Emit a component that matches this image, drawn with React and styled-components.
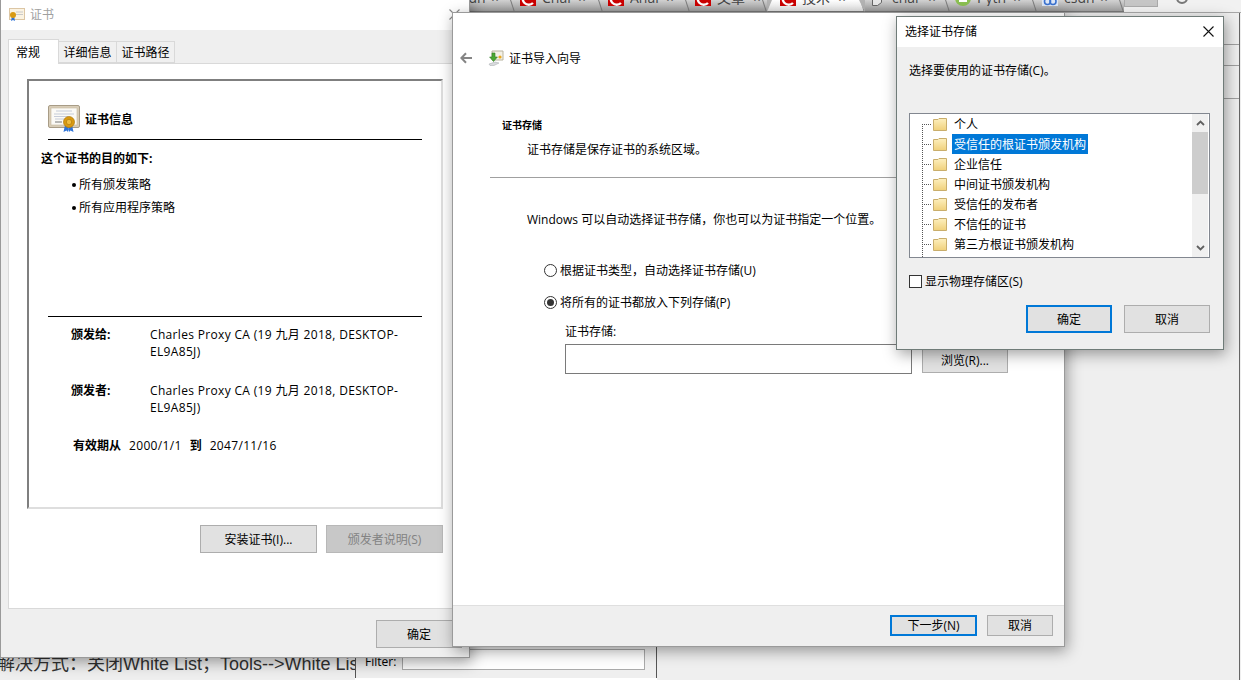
import React from 'react';
import styled, { createGlobalStyle, css } from 'styled-components';

const GlobalStyle = createGlobalStyle`
  html, body {
    margin: 0;
    padding: 0;
    background: #efefef;
  }
  * {
    box-sizing: border-box;
  }
`;

const Desktop = styled.div`
  position: relative;
  width: 1241px;
  height: 680px;
  overflow: hidden;
  background: #efefef;
  color: #000;
  font: 12px/17px "Open Sans", "Noto Sans CJK SC", sans-serif;
`;

// Browser tabs peeking out at the top
const TabStrip = styled.div`
  display: flex;
  height: 13px;
  padding-left: 428px;
  overflow: hidden;
  background: linear-gradient(to right, #b4b4b4 1124px, #f1f1f1 1124px);
  border-bottom: 1px solid #a8a8a8;
`;

const BrowserTab = styled.div`
  position: relative;
  display: flex;
  flex: none;
  gap: 6px;
  align-items: flex-start;
  width: ${({ $width }) => $width}px;
  height: 12px;
  padding-left: ${({ $active }) => ($active ? 13 : 5)}px;
  overflow: hidden;
  color: #444;
  font-size: 14px;
  line-height: 16px;
  background: ${({ $active }) => ($active
    ? 'linear-gradient(#fff, #e4e4e4)'
    : 'linear-gradient(#d2d2d2, #a0a0a0)')};
  border-bottom: 1px solid #777;
  ${({ $active }) => $active && css`
    clip-path: polygon(5px 0, calc(100% - 6px) 0, 100% 100%, 0 100%);
  `}
  &::after {
    position: absolute;
    top: -2px;
    right: 2px;
    width: 1px;
    height: 16px;
    background: #7d7d7d;
    transform: rotate(-18deg);
    content: '';
  }
`;

const TabIconBox = styled.svg`
  flex: none;
  margin-top: -10px;
`;

const TabLabel = styled.span`
  width: ${({ $active }) => ($active ? 30 : 30)}px;
  margin-top: -10px;
  overflow: hidden;
  white-space: nowrap;
`;

const TabClose = styled.span`
  margin-top: -10px;
  font-weight: 700;
`;

const NewTab = styled.div`
  flex: none;
  width: 34px;
  height: 7px;
  background: #c6c6c6;
  border: 1px solid #aaa;
  border-top: 0;
`;

const BrowserDot = styled.div`
  flex: none;
  width: 12px;
  height: 12px;
  margin: -8px 0 0 18px;
  border: 2px solid #777;
  border-radius: 50%;
`;

const BackPane = styled.div`
  position: absolute;
  top: 13px;
  left: 1000px;
  width: 240px;
  height: 667px;
  border-right: 1px solid #666;
`;

const PaneRow = styled.div`
  height: ${({ $height }) => $height}px;
  border-bottom: 1px solid #a0a0a0;
`;

const Note = styled.div`
  position: absolute;
  top: 652px;
  left: -3px;
  color: #333;
  font: 18px/24px "Liberation Sans", "Noto Sans CJK SC", sans-serif;
  white-space: nowrap;
`;

const FilterWindow = styled.div`
  position: absolute;
  top: 630px;
  left: 355px;
  display: flex;
  align-items: flex-end;
  justify-content: space-between;
  width: 302px;
  height: 48px;
  padding: 0 11px 8px 9px;
  background: #efefef;
  border-right: 1px solid #555;
  border-left: 1px solid #555;
  box-shadow: 0 2px 0 #fff, 0 3px 0 #555;
`;

const FilterInput = styled.div`
  width: 243px;
  height: 21px;
  background: #fff;
  border: 1px solid #aaa;
`;

// Windows
const Window = styled.div`
  position: absolute;
  top: ${({ $top }) => $top}px;
  left: ${({ $left }) => $left}px;
  display: flex;
  flex-direction: column;
  width: ${({ $width }) => $width}px;
  height: ${({ $height }) => $height}px;
  background: #efefef;
  border: 1px solid ${({ $border }) => $border || '#9a9a9a'};
  box-shadow: 2px 4px 14px rgba(0, 0, 0, 0.38);
`;

const TitleBar = styled.div`
  display: flex;
  flex: none;
  align-items: center;
  justify-content: space-between;
  height: 30px;
  padding: 0 ${({ $right }) => $right}px 2px 8px;
  color: ${({ $faded }) => ($faded ? '#a0a0a0' : '#000')};
  background: #fff;
`;

const TitleGroup = styled.div`
  display: flex;
  gap: 5px;
  align-items: center;
`;

const Button = styled.div`
  display: flex;
  flex: none;
  align-items: center;
  justify-content: center;
  width: ${({ $width }) => $width || 86}px;
  height: ${({ $height }) => $height || 28}px;
  background: #e1e1e1;
  border: 1px solid #adadad;
  ${({ $primary }) => $primary && css`
    border: 2px solid #0078d7;
  `}
  ${({ $disabled }) => $disabled && css`
    color: #838383;
    background: #c8c8c8;
    border-color: #b8b8b8;
  `}
`;

// Certificate window
const CertBody = styled.div`
  display: flex;
  flex: 1;
  flex-direction: column;
  padding: 9px 7px 0 7px;
`;

const CertTabs = styled.div`
  display: flex;
  align-items: flex-end;
  height: 24px;
`;

const CertTab = styled.div`
  position: relative;
  z-index: 1;
  display: flex;
  align-items: center;
  justify-content: ${({ $active }) => ($active ? 'flex-start' : 'center')};
  width: ${({ $width }) => $width}px;
  height: ${({ $active }) => ($active ? 25 : 22)}px;
  margin-bottom: ${({ $active }) => ($active ? -1 : 0)}px;
  padding-left: ${({ $active }) => ($active ? 7 : 0)}px;
  background: ${({ $active }) => ($active ? '#fff' : '#f0f0f0')};
  border: 1px solid #d9d9d9;
  border-bottom: ${({ $active }) => ($active ? 0 : '1px solid #d9d9d9')};
  border-left: ${({ $active }) => ($active ? '1px solid #d9d9d9' : 0)};
`;

const CertPanel = styled.div`
  height: 546px;
  padding: 15px 0 0 18px;
  background: #fff;
  border: 1px solid #d9d9d9;
`;

const CertFrame = styled.div`
  width: 416px;
  height: 430px;
  padding: 24px 0 0;
  border-top: 2px solid #7f7f7f;
  border-right: 2px solid #dedede;
  border-bottom: 2px solid #dedede;
  border-left: 2px solid #7f7f7f;
`;

const CertHeader = styled.div`
  display: flex;
  gap: 5px;
  align-items: center;
  width: 374px;
  height: 35px;
  margin-left: 19px;
  padding-bottom: 6px;
  font-weight: 700;
  border-bottom: 1px solid #000;
`;

const Purpose = styled.div`
  height: 176px;
  margin-left: 12px;
  padding-top: 10px;
`;

const Strong = styled.div`
  font-weight: 700;
`;

const BulletList = styled.ul`
  display: flex;
  flex-direction: column;
  gap: 6px;
  margin: 9px 0 0;
  padding: 0 0 0 31px;
  list-style: none;
`;

const Bullet = styled.li`
  display: flex;
  gap: 3px;
  align-items: center;
  &::before {
    display: block;
    width: 4px;
    height: 4px;
    background: #000;
    border-radius: 50%;
    content: '';
  }
`;

const Details = styled.div`
  width: 374px;
  margin-left: 19px;
  padding: 9px 0 0 23px;
  border-top: 1px solid #000;
`;

const DetailRow = styled.div`
  display: grid;
  grid-template-columns: 79px 272px;
  margin-bottom: 22px;
`;

const Value = styled.span`
  letter-spacing: 0.33px;
`;

const Validity = styled.div`
  display: flex;
  gap: 8px;
  margin: -1px 0 0 2px;
`;

const CertActions = styled.div`
  display: flex;
  gap: 9px;
  justify-content: flex-end;
  width: 416px;
  margin-top: 16px;
`;

const CertFooter = styled.div`
  display: flex;
  justify-content: flex-end;
  margin-top: 11px;
`;

// Import wizard
const WizardMain = styled.div`
  flex: 1;
  background: #fff;
`;

const WizardHeader = styled.div`
  display: flex;
  align-items: center;
  height: 16px;
  margin-top: 37px;
  padding-left: 7px;
  font-size: 12px;
`;

const BackArrow = styled.svg`
  margin-right: 16px;
`;

const WizardTitle = styled.span`
  margin-left: 5px;
`;

const StepTitle = styled.div`
  margin: 52px 0 0 49px;
  font-size: 10px;
  font-weight: 700;
  line-height: 14px;
`;

const StepText = styled.div`
  margin: ${({ $top }) => $top}px 0 0 74px;
`;

const Divider = styled.div`
  margin: 19px 0 0 37px;
  border-top: 1px solid #a0a0a0;
`;

const Options = styled.div`
  display: flex;
  flex-direction: column;
  gap: 15px;
  margin: 34px 0 0 91px;
`;

const Option = styled.div`
  display: flex;
  gap: 3px;
  align-items: center;
`;

const Radio = styled.span`
  display: flex;
  align-items: center;
  justify-content: center;
  width: 13px;
  height: 13px;
  background: #fff;
  border: 1px solid #333;
  border-radius: 50%;
  &::after {
    display: ${({ $checked }) => ($checked ? 'block' : 'none')};
    width: 7px;
    height: 7px;
    background: #333;
    border-radius: 50%;
    content: '';
  }
`;

const StoreField = styled.div`
  margin: 12px 0 0 112px;
`;

const StoreRow = styled.div`
  display: flex;
  gap: 10px;
  align-items: flex-end;
  margin-top: 4px;
`;

const StoreInput = styled.div`
  width: 347px;
  height: 30px;
  background: #fff;
  border: 1px solid #7a7a7a;
`;

const BrowseButton = styled(Button)`
  margin-bottom: 1px;
`;

const WizardFooter = styled.div`
  display: flex;
  flex: none;
  gap: 10px;
  justify-content: flex-end;
  height: 41px;
  padding: 9px 11px 0 0;
  border-top: 1px solid #dfdfdf;
`;

// Store dialog
const DialogBody = styled.div`
  display: flex;
  flex: 1;
  flex-direction: column;
  padding: 15px 13px 0 12px;
`;

const Tree = styled.div`
  display: flex;
  width: 301px;
  height: 145px;
  margin-top: 34px;
  background: #fff;
  border: 1px solid #828790;
`;

const TreeList = styled.div`
  flex: 1;
  overflow: hidden;
`;

const TreeRow = styled.div`
  display: flex;
  align-items: center;
  height: 20px;
  padding-left: 12px;
`;

const Connector = styled.span`
  flex: none;
  align-self: stretch;
  width: 10px;
  margin-right: 1px;
  background:
    repeating-linear-gradient(to bottom, #555 0 1px, transparent 1px 2px) left ${({ $first }) => ($first ? 'bottom' : 'top')} / 1px ${({ $first }) => ($first ? '50%' : '100%')} no-repeat,
    repeating-linear-gradient(to right, #555 0 1px, transparent 1px 2px) left center / 100% 1px no-repeat;
`;

const TreeTail = styled.div`
  width: 1px;
  height: 4px;
  margin-left: 12px;
  background: repeating-linear-gradient(to bottom, #555 0 1px, transparent 1px 2px);
`;

const TreeLabel = styled.span`
  display: flex;
  align-items: center;
  align-self: stretch;
  margin-left: 5px;
  padding: 0 2px;
  color: ${({ $selected }) => ($selected ? '#fff' : '#000')};
  background: ${({ $selected }) => ($selected ? '#0078d7' : 'transparent')};
`;

const Scrollbar = styled.div`
  display: flex;
  flex: none;
  flex-direction: column;
  width: 16px;
  margin-right: 1px;
  background: #f0f0f0;
`;

const ScrollArrow = styled.div`
  display: flex;
  flex: none;
  align-items: center;
  justify-content: center;
  height: 18px;
`;

const ScrollThumb = styled.div`
  flex: none;
  height: 62px;
  background: #cdcdcd;
`;

const ScrollTrack = styled.div`
  flex: 1;
`;

const CheckRow = styled.div`
  display: flex;
  gap: 3px;
  align-items: center;
  height: 13px;
  margin-top: 17px;
`;

const CheckBox = styled.span`
  width: 13px;
  height: 13px;
  background: #fff;
  border: 1px solid #333;
`;

const DialogActions = styled.div`
  display: flex;
  gap: 12px;
  justify-content: flex-end;
  margin-top: 17px;
`;

const CertIcon = () => (
  <svg width="32" height="28" viewBox="0 0 32 28">
    <rect x="0.5" y="0.5" width="31" height="22" rx="1.5" fill="#d8cdb8" stroke="#a89c86" />
    <rect x="3" y="3" width="26" height="17" fill="#fbfaf6" stroke="#c6b99f" strokeWidth="0.6" />
    <path d="M8 6h16M6 9h20M6 11.5h14M7 14h10" stroke="#b9c0d2" strokeWidth="0.8" />
    <path d="M7 17h7" stroke="#8b8b8b" strokeWidth="1.2" />
    <path d="M17 20l-1.5 7 3-1.5 1.5 1.5 1-6zM24 20l1.5 7-3-1.5-1.5 1.5-1-6z" fill="#2f74d8" />
    <circle cx="21" cy="17" r="5.5" fill="#d99a12" stroke="#b07a08" strokeWidth="0.7" />
    <circle cx="21" cy="17" r="2.7" fill="#eebb3d" stroke="#a87408" strokeWidth="0.6" />
  </svg>
);

const SmallCertIcon = () => (
  <svg width="16" height="13" viewBox="0 0 16 13">
    <rect x="0.5" y="0.5" width="15" height="11" fill="#fbf3e2" stroke="#dcc6a4" />
    <path d="M7 4h7M7 6.5h7" stroke="#c9c9c9" />
    <path d="M3 8l-1 5 2-1 2 1-1-5z" fill="#2f74d8" />
    <circle cx="4" cy="7" r="3" fill="#d99a12" />
  </svg>
);

const WizardIcon = () => (
  <svg width="16" height="16" viewBox="0 0 16 16">
    <path d="M4 1h11v9H4z" fill="#f4f1e6" stroke="#b8b39f" />
    <circle cx="12" cy="7" r="1.6" fill="#e9a81c" />
    <path d="M1 14l6-2 4 1-5 2.5H2z" fill="#d8dadd" stroke="#a5a9ad" strokeWidth="0.5" />
    <path d="M7 3v4h2.4L5.5 11.5 1.6 7H4V3z" fill="#4aa832" stroke="#2f7d22" strokeWidth="0.6" />
  </svg>
);

const ArrowLeft = () => (
  <BackArrow width="12" height="12" viewBox="0 0 12 12">
    <path d="M6 1.2L1.4 6 6 10.8M1.6 6H12" fill="none" stroke="#858585" strokeWidth="2" />
  </BackArrow>
);

const CloseIcon = ({ color }) => (
  <svg width="11" height="11" viewBox="0 0 11 11">
    <path d="M0.5 0.5l10 10M10.5 0.5l-10 10" stroke={color} strokeWidth="1.1" />
  </svg>
);

const FolderIcon = () => (
  <svg width="14" height="14" viewBox="0 0 14 14">
    <defs>
      <linearGradient id="folder" x1="0" y1="0" x2="0" y2="1">
        <stop offset="0" stopColor="#fdf0bf" />
        <stop offset="1" stopColor="#f0d07a" />
      </linearGradient>
    </defs>
    <path d="M0.5 2.5V13.5H13.5V1.5H6L5 2.5z" fill="url(#folder)" stroke="#c9ae6c" />
  </svg>
);

const Chevron = ({ down }) => (
  <svg width="9" height="6" viewBox="0 0 9 6">
    <path d={down ? 'M1 1l3.5 3.5L8 1' : 'M1 5l3.5-3.5L8 5'} fill="none" stroke="#606060" strokeWidth="1.8" />
  </svg>
);

const TabIcon = ({ kind }) => (
  <TabIconBox width="16" height="16" viewBox="0 0 16 16">
    {kind === 'red' && (
      <>
        <rect width="16" height="16" fill="#cc0000" />
        <path d="M13 4.5A6 6 0 1 0 13 13" fill="none" stroke="#fff" strokeWidth="2.4" />
      </>
    )}
    {kind === 'doc' && (
      <path d="M2.5 0.5h9v12l-4 3h-5z" fill="#e8e8e8" stroke="#666" />
    )}
    {kind === 'green' && (
      <>
        <circle cx="8" cy="8" r="8" fill="#8cc152" />
        <rect x="4" y="8" width="8" height="4" fill="#fff" />
      </>
    )}
    {kind === 'blue' && (
      <>
        <rect width="16" height="16" fill="#dfe9f8" />
        <circle cx="5.5" cy="11.5" r="3" fill="none" stroke="#3b73d1" strokeWidth="1.6" />
        <circle cx="11" cy="11.5" r="3" fill="none" stroke="#3b73d1" strokeWidth="1.6" />
      </>
    )}
  </TabIconBox>
);

const browserTabs = [
  { label: 'csdn', kind: 'red', width: 87 },
  { label: 'Char', kind: 'red', width: 88 },
  { label: 'Anal', kind: 'red', width: 87 },
  { label: '文章', kind: 'red', width: 77 },
  { label: '技术', kind: 'red', width: 98, active: true },
  { label: 'char', kind: 'doc', width: 85 },
  { label: 'Pyth', kind: 'green', width: 87 },
  { label: 'csdn', kind: 'blue', width: 87 },
];

const stores = [
  '个人',
  '受信任的根证书颁发机构',
  '企业信任',
  '中间证书颁发机构',
  '受信任的发布者',
  '不信任的证书',
  '第三方根证书颁发机构',
];

const ISSUER = 'Charles Proxy CA (19 九月 2018, DESKTOP-EL9A85J)';

function App() {
  return (
    <Desktop>
      <GlobalStyle />
      <TabStrip>
        {browserTabs.map((tab) => (
          <BrowserTab key={tab.label + tab.width} $width={tab.width} $active={tab.active}>
            <TabIcon kind={tab.kind} />
            <TabLabel>{tab.label}</TabLabel>
            <TabClose>×</TabClose>
          </BrowserTab>
        ))}
        <NewTab />
        <BrowserDot />
      </TabStrip>

      <BackPane>
        <PaneRow $height={32} />
        <PaneRow $height={21} />
        <PaneRow $height={33} />
      </BackPane>

      <Note>解决方式：关闭White List；Tools--&gt;White List</Note>
      <FilterWindow>
        <span>Filter:</span>
        <FilterInput />
      </FilterWindow>

      <Window $top={-1} $left={0} $width={470} $height={659}>
        <TitleBar $right={9} $faded>
          <TitleGroup>
            <SmallCertIcon />
            <span>证书</span>
          </TitleGroup>
          <CloseIcon color="#8a8a8a" />
        </TitleBar>
        <CertBody>
          <CertTabs>
            <CertTab $width={51} $active>常规</CertTab>
            <CertTab $width={58}>详细信息</CertTab>
            <CertTab $width={58}>证书路径</CertTab>
          </CertTabs>
          <CertPanel>
            <CertFrame>
              <CertHeader>
                <CertIcon />
                <span>证书信息</span>
              </CertHeader>
              <Purpose>
                <Strong>这个证书的目的如下:</Strong>
                <BulletList>
                  <Bullet>所有颁发策略</Bullet>
                  <Bullet>所有应用程序策略</Bullet>
                </BulletList>
              </Purpose>
              <Details>
                <DetailRow>
                  <Strong>颁发给:</Strong>
                  <Value>{ISSUER}</Value>
                </DetailRow>
                <DetailRow>
                  <Strong>颁发者:</Strong>
                  <Value>{ISSUER}</Value>
                </DetailRow>
                <Validity>
                  <Strong>有效期从</Strong>
                  <Value>2000/1/1</Value>
                  <Strong>到</Strong>
                  <Value>2047/11/16</Value>
                </Validity>
              </Details>
            </CertFrame>
            <CertActions>
              <Button $width={117}>安装证书(I)...</Button>
              <Button $width={117} $disabled>颁发者说明(S)</Button>
            </CertActions>
          </CertPanel>
          <CertFooter>
            <Button>确定</Button>
          </CertFooter>
        </CertBody>
      </Window>

      <Window $top={12} $left={452} $width={613} $height={635}>
        <WizardMain>
          <WizardHeader>
            <ArrowLeft />
            <WizardIcon />
            <WizardTitle>证书导入向导</WizardTitle>
          </WizardHeader>
          <StepTitle>证书存储</StepTitle>
          <StepText $top={9}>证书存储是保存证书的系统区域。</StepText>
          <Divider />
          <StepText $top={33}>Windows 可以自动选择证书存储，你也可以为证书指定一个位置。</StepText>
          <Options>
            <Option>
              <Radio />
              <span>根据证书类型，自动选择证书存储(U)</span>
            </Option>
            <Option>
              <Radio $checked />
              <span>将所有的证书都放入下列存储(P)</span>
            </Option>
          </Options>
          <StoreField>
            <span>证书存储:</span>
            <StoreRow>
              <StoreInput />
              <BrowseButton $height={26}>浏览(R)...</BrowseButton>
            </StoreRow>
          </StoreField>
        </WizardMain>
        <WizardFooter>
          <Button $primary $width={87} $height={21}>下一步(N)</Button>
          <Button $width={66} $height={21}>取消</Button>
        </WizardFooter>
      </Window>

      <Window $top={16} $left={896} $width={328} $height={334} $border="#6f7b78">
        <TitleBar $right={9}>
          <span>选择证书存储</span>
          <CloseIcon color="#111" />
        </TitleBar>
        <DialogBody>
          <div>选择要使用的证书存储(C)。</div>
          <Tree>
            <TreeList>
              {stores.map((store, index) => (
                <TreeRow key={store}>
                  <Connector $first={index === 0} />
                  <FolderIcon />
                  <TreeLabel $selected={index === 1}>{store}</TreeLabel>
                </TreeRow>
              ))}
              <TreeTail />
            </TreeList>
            <Scrollbar>
              <ScrollArrow><Chevron /></ScrollArrow>
              <ScrollThumb />
              <ScrollTrack />
              <ScrollArrow><Chevron down /></ScrollArrow>
            </Scrollbar>
          </Tree>
          <CheckRow>
            <CheckBox />
            <span>显示物理存储区(S)</span>
          </CheckRow>
          <DialogActions>
            <Button $primary>确定</Button>
            <Button>取消</Button>
          </DialogActions>
        </DialogBody>
      </Window>
    </Desktop>
  );
}

export default App;
